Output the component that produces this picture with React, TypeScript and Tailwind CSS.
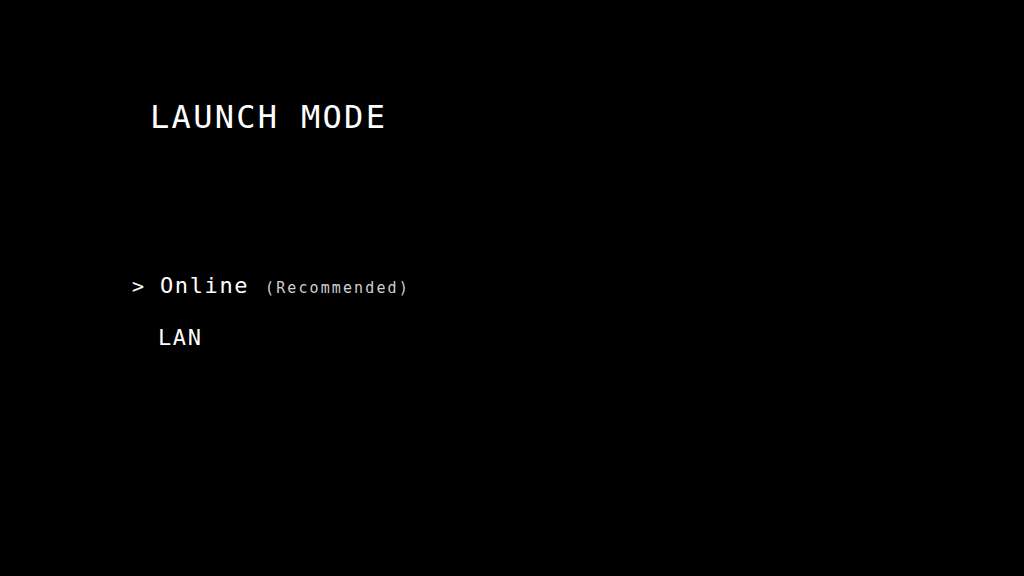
export default function App() {
  return (
    <div
      className="w-[1024px] h-[576px] bg-black text-white overflow-hidden"
      style={{ fontFamily: '"DejaVu Sans Mono", "Liberation Mono", monospace' }}
    >
      <div className="pt-[101px] pl-[150px]">
        <h1 className="text-[32px] leading-[32px] tracking-[2.3px] font-normal">LAUNCH MODE</h1>
      </div>

      <ul className="mt-[142px] pl-[132px] flex flex-col gap-[30px]">
        <li className="flex items-baseline h-[22px]">
          <span className="w-[28px] text-[20px] leading-[22px] text-white">&gt;</span>
          <span className="text-[22px] leading-[22px] tracking-[1.6px]">Online</span>
          <span className="ml-[16px] text-[15px] leading-[22px] tracking-[2.1px] text-[#cfcfcf]">
            (Recommended)
          </span>
        </li>
        <li className="flex items-baseline h-[22px]">
          <span className="w-[26px]" />
          <span className="text-[22px] leading-[22px] tracking-[1.6px]">LAN</span>
        </li>
      </ul>
    </div>
  );
}
